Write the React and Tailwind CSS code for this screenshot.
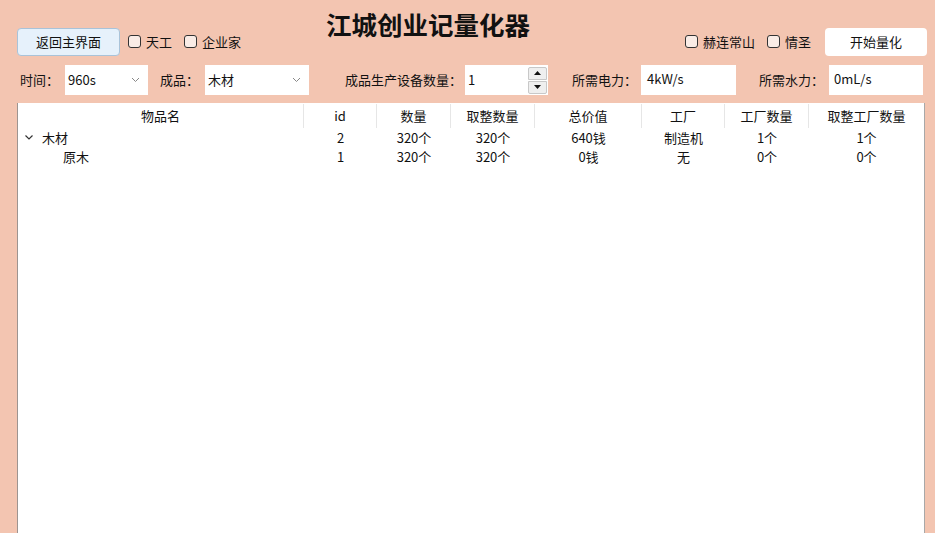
import React from "react";

const font = { fontFamily: '"Noto Sans CJK SC", "Noto Sans", sans-serif' };

function Check({ label, className = "" }) {
  return (
    <div className={"flex items-center " + className}>
      <span className="w-[13px] h-[13px] rounded-[3px] border border-[#333] bg-[#f9ece6]" />
      <span className="ml-[5px] text-[13px] leading-none text-[#111]">{label}</span>
    </div>
  );
}

function Chevron() {
  return (
    <svg width="9" height="6" viewBox="0 0 9 6" className="text-[#888]">
      <polyline points="1,1 4.5,4.5 8,1" fill="none" stroke="currentColor" strokeWidth="1" />
    </svg>
  );
}

function Select({ value, w }) {
  return (
    <div className={"h-[30px] bg-white flex items-center justify-between pl-[3px] pr-[8px] " + w}>
      <span className="text-[13px] text-[#111]">{value}</span>
      <Chevron />
    </div>
  );
}

const cols = [
  { name: "物品名", w: "w-[286px]" },
  { name: "id", w: "w-[73px]" },
  { name: "数量", w: "w-[74px]" },
  { name: "取整数量", w: "w-[84px]" },
  { name: "总价值", w: "w-[107px]" },
  { name: "工厂", w: "w-[83px]" },
  { name: "工厂数量", w: "w-[84px]" },
  { name: "取整工厂数量", w: "flex-1" },
];

const rows = [
  { name: "木材", level: 0, vals: ["2", "320个", "320个", "640钱", "制造机", "1个", "1个"] },
  { name: "原木", level: 1, vals: ["1", "320个", "320个", "0钱", "无", "0个", "0个"] },
];

export default function App() {
  return (
    <div style={font} className="w-[935px] h-[533px] bg-[#f3c5b1] overflow-hidden flex flex-col text-[#111]">
      {/* Row 1 */}
      <div className="flex items-start pl-[17px] pr-[8px] h-[65px]">
        <button className="mt-[28px] w-[103px] h-[28px] rounded-[4px] border border-[#a9c3d9] bg-[#e6f1fb] text-[13px] text-[#111] flex items-center justify-center">
          返回主界面
        </button>
        <Check label="天工" className="mt-[35px] ml-[8px]" />
        <Check label="企业家" className="mt-[35px] ml-[12px]" />
        <div className="ml-[85px] mt-[7px] text-[25.5px] font-bold leading-[34px] tracking-[0px] text-[#111]">
          江城创业记量化器
        </div>
        <div className="flex-1" />
        <Check label="赫连常山" className="mt-[35px]" />
        <Check label="情圣" className="mt-[35px] ml-[12px]" />
        <button className="mt-[28px] ml-[14px] w-[102px] h-[28px] rounded-[4px] bg-white text-[13px] text-[#111] flex items-center justify-center">
          开始量化
        </button>
      </div>

      {/* Row 2 */}
      <div className="flex items-center h-[30px] text-[13px]">
        <span className="ml-[20px] w-[45px]">时间：</span>
        <Select value="960s" w="w-[83px]" />
        <span className="ml-[12px] w-[45px]">成品：</span>
        <Select value="木材" w="w-[104px]" />
        <span className="ml-[36px] w-[120px]">成品生产设备数量：</span>
        <div className="w-[83px] h-[30px] bg-white flex items-center pl-[3px] pr-[1px]">
          <span className="flex-1">1</span>
          <div className="flex flex-col gap-[1px]">
            <div className="w-[19px] h-[13px] bg-[#efefef] border border-[#c8c8c8] rounded-t-[2px] flex items-center justify-center">
              <svg width="7" height="4" viewBox="0 0 7 4"><polygon points="0,4 3.5,0 7,4" fill="#111" /></svg>
            </div>
            <div className="w-[19px] h-[13px] bg-[#efefef] border border-[#c8c8c8] rounded-b-[2px] flex items-center justify-center">
              <svg width="7" height="4" viewBox="0 0 7 4"><polygon points="0,0 3.5,4 7,0" fill="#111" /></svg>
            </div>
          </div>
        </div>
        <span className="ml-[24px] w-[69px]">所需电力：</span>
        <div className="w-[95px] h-[30px] bg-white pl-[6px] pt-[4px]">4kW/s</div>
        <span className="ml-[23px] w-[70px]">所需水力：</span>
        <div className="w-[94px] h-[30px] bg-white pl-[5px] pt-[4px]">0mL/s</div>
      </div>

      {/* Table */}
      <div className="mt-[8px] ml-[17px] w-[908px] flex-1 bg-white border-l border-l-[#9d9490] border-r border-r-[#a8a8a8] text-[13px]">
        <div className="flex h-[25px] items-center">
          {cols.map((c, i) => (
            <div
              key={c.name}
              className={
                c.w +
                " h-[24px] flex items-center justify-center " +
                (i < cols.length - 1 ? "border-r border-[#e6e6e6]" : "")
              }
            >
              {c.name}
            </div>
          ))}
        </div>
        {rows.map((r) => (
          <div key={r.name} className="flex h-[19px] items-center leading-none">
            <div className="w-[286px] flex items-center">
              {r.level === 0 ? (
                <>
                  <span className="ml-[7px] w-[17px] flex items-center">
                    <svg width="8" height="5" viewBox="0 0 8 5">
                      <polyline points="0.5,0.5 4,4 7.5,0.5" fill="none" stroke="#333" strokeWidth="1.2" />
                    </svg>
                  </span>
                  <span>{r.name}</span>
                </>
              ) : (
                <span className="ml-[45px]">{r.name}</span>
              )}
            </div>
            {r.vals.map((v, i) => (
              <div key={i} className={cols[i + 1].w + " text-center"}>
                {v}
              </div>
            ))}
          </div>
        ))}
      </div>
    </div>
  );
}
